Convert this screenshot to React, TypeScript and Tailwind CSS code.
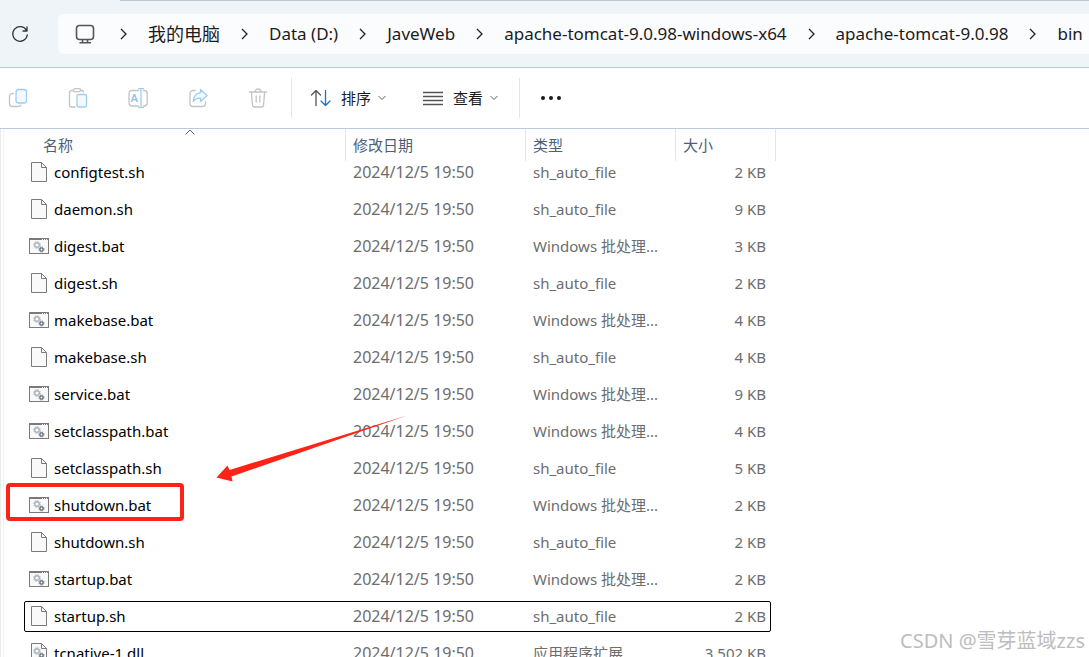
import { Fragment } from "react";
import type { ReactNode } from "react";

type FileKind = "sh" | "bat" | "dll";

type FileEntry = {
  name: string;
  type: string;
  size: string;
  kind: FileKind;
  focused?: boolean;
  marked?: boolean;
};

const SH = "sh_auto_file";
const BAT = "Windows 批处理...";
const modified = "2024/12/5 19:50";

const files: FileEntry[] = [
  { name: "configtest.sh", type: SH, size: "2 KB", kind: "sh" },
  { name: "daemon.sh", type: SH, size: "9 KB", kind: "sh" },
  { name: "digest.bat", type: BAT, size: "3 KB", kind: "bat" },
  { name: "digest.sh", type: SH, size: "2 KB", kind: "sh" },
  { name: "makebase.bat", type: BAT, size: "4 KB", kind: "bat" },
  { name: "makebase.sh", type: SH, size: "4 KB", kind: "sh" },
  { name: "service.bat", type: BAT, size: "9 KB", kind: "bat" },
  { name: "setclasspath.bat", type: BAT, size: "4 KB", kind: "bat" },
  { name: "setclasspath.sh", type: SH, size: "5 KB", kind: "sh" },
  { name: "shutdown.bat", type: BAT, size: "2 KB", kind: "bat", marked: true },
  { name: "shutdown.sh", type: SH, size: "2 KB", kind: "sh" },
  { name: "startup.bat", type: BAT, size: "2 KB", kind: "bat" },
  { name: "startup.sh", type: SH, size: "2 KB", kind: "sh", focused: true },
  { name: "tcnative-1.dll", type: "应用程序扩展", size: "3,502 KB", kind: "dll" },
];

const crumbs = [
  "我的电脑",
  "Data (D:)",
  "JaveWeb",
  "apache-tomcat-9.0.98-windows-x64",
  "apache-tomcat-9.0.98",
  "bin",
];

const Icon = ({ children }: { children: ReactNode }) => (
  <svg
    viewBox="0 0 20 20"
    className="size-5 shrink-0"
    fill="none"
    strokeWidth="1.3"
    strokeLinecap="round"
    strokeLinejoin="round"
    aria-hidden="true"
  >
    {children}
  </svg>
);

const GRAY = "#c4c4c4";
const BLUE = "#9fcdf0";

const tools = [
  {
    label: "复制",
    icon: (
      <Icon>
        <path d="M5.5 5.5h-1a3 3 0 0 0-3 3v7a3 3 0 0 0 3 3H10a3 3 0 0 0 2.8-1.5" stroke={GRAY} />
        <rect x="8" y="1.5" width="10.5" height="13.5" rx="2.5" stroke={BLUE} fill="#f3f9fe" />
      </Icon>
    ),
  },
  {
    label: "粘贴",
    icon: (
      <Icon>
        <path d="M5.500 2.500h-2a2 2 0 0 0-2 2V17a2 2 0 0 0 2 2H7M12.5 2.5H14A1.5 1.5 0 0 1 15.5 4" stroke={GRAY} />
        <rect x="5.5" y="0.7" width="7" height="3" rx="1.5" stroke={GRAY} />
        <rect x="9" y="6.5" width="9.5" height="12.5" rx="1.5" stroke={BLUE} fill="#f3f9fe" />
      </Icon>
    ),
  },
  {
    label: "重命名",
    icon: (
      <Icon>
        <path
          d="M10.5 2.5H4a3 3 0 0 0-3 3V15a3 3 0 0 0 3 3h6.500M15.5 2.500h.7a3 3 0 0 1 3 3V15a3 3 0 0 1-3 3h-.7"
          stroke={GRAY}
        />
        <path d="M10.5 0.7h5M10.5 19.3h5M13 0.7v18.6" stroke={BLUE} />
        <text x="2.5" y="14" fontSize="11" fill="#8cc3ee" className="font-['Noto_Sans',sans-serif] font-semibold">
          A
        </text>
      </Icon>
    ),
  },
  {
    label: "共享",
    icon: (
      <Icon>
        <path d="M7 2.5H5a3 3 0 0 0-3 3v10a3 3 0 0 0 3 3h9.500a3 3 0 0 0 3-3V14" stroke={GRAY} />
        <path
          d="M12.5 1.5l6.500 6-6.500 6v-3.300c-3-.2-5.200.6-7.300 3.300.4-5 3-8.300 7.300-8.800z"
          stroke={BLUE}
          fill="#f3f9fe"
        />
      </Icon>
    ),
  },
  {
    label: "删除",
    icon: (
      <Icon>
        <path
          d="M1.5 4h17M7 4a3 3 0 0 1 6 0M3.3 4l1.200 13a2 2 0 0 0 2 2h7a2 2 0 0 0 2-2l1.200-13M8.200 8v6M11.8 8v6"
          stroke={GRAY}
        />
      </Icon>
    ),
  },
];

const ChevronDown = () => (
  <svg viewBox="0 0 8 6" className="h-[6px] w-2" fill="none" stroke="#666" aria-hidden="true">
    <path d="M0.5 1L4 4.5 7.5 1" />
  </svg>
);

const Gears = () => (
  <>
    <circle cx="8" cy="7" r="2.3" stroke="#a9b4be" strokeWidth="1.4" />
    <circle cx="8" cy="7" r="3.4" stroke="#a9b4be" strokeDasharray="1.3 1.37" />
    <circle cx="12.5" cy="11.5" r="1.6" stroke="#66717b" strokeWidth="1.3" />
    <circle cx="12.5" cy="11.5" r="2.5" stroke="#66717b" strokeDasharray="1 0.96" />
  </>
);

const FileIcon = ({ kind }: { kind: FileKind }) => {
  if (kind === "bat") {
    return (
      <svg viewBox="0 0 20 16" className="h-4 w-5" fill="none" aria-hidden="true">
        <rect x="0.5" y="0.5" width="19" height="15" fill="#f9f9f9" stroke="#7a7a7a" />
        <path d="M0 1h20" stroke="#7a7a7a" strokeWidth="2" />
        <path d="M13 1.5h1M15 1.5h1M17 1.5h1" stroke="#fff" />
        <Gears />
      </svg>
    );
  }
  return (
    <svg viewBox="0 0 16 20" className="h-5 w-4" fill="none" aria-hidden="true">
      <path d="M0.5 0.5h10l5 5v14h-15z" fill="#f9f9f9" stroke="#7a7a7a" />
      <path d="M10.5 0.5v5h5" stroke="#7a7a7a" />
      {kind === "dll" && (
        <g transform="translate(-2 1)">
          <Gears />
        </g>
      )}
    </svg>
  );
};

const AddressBar = () => (
  <header className="flex h-[68px] shrink-0 items-center border-b border-[#b9cbdb] bg-[#eff4f9]">
    <div className="flex w-[58px] shrink-0 pl-[10px]">
      <button aria-label="刷新" className="text-[#333]">
        <Icon>
          <path d="M16.500 6.500A7.300 7.300 0 1 0 17.300 11M17 3v4h-4" stroke="currentColor" />
        </Icon>
      </button>
    </div>
    <nav
      aria-label="路径"
      className="flex h-10 min-w-0 flex-1 items-center gap-[21px] overflow-hidden rounded-l-md bg-[#fbfcfe] pl-[17px] text-[17px] whitespace-nowrap text-[#1b1b1b]"
    >
      <span className="mr-1 shrink-0">
        <Icon>
          <g stroke="#555" strokeWidth="1.6">
            <rect x="1.5" y="1.5" width="17" height="14" rx="3" />
            <path d="M7.5 16v2.500M12.5 16v2.500M5 18.700h10.500" />
          </g>
        </Icon>
      </span>
      {crumbs.map((crumb, index) => (
        <Fragment key={crumb}>
          <svg viewBox="0 0 7 12" className="h-3 w-[7px] shrink-0" fill="none" stroke="#222" strokeWidth="1.3" aria-hidden="true">
            <path d="M1 1l5 5-5 5" />
          </svg>
          <a href="#" className={index === 0 ? "text-lg" : ""}>
            {crumb}
          </a>
        </Fragment>
      ))}
    </nav>
  </header>
);

const Toolbar = () => (
  <div className="flex h-[61px] shrink-0 items-center border-b border-[#b9cbdb] bg-white text-[15px] text-[#1b1b1b]">
    <div className="flex gap-10 pl-2">
      {tools.map((tool) => (
        <button key={tool.label} aria-label={tool.label} disabled>
          {tool.icon}
        </button>
      ))}
    </div>
    <div className="ml-[23px] flex h-10 items-center gap-[37px] border-l border-[#e5e5e5] pr-[21px] pl-[19px]">
      <button className="flex items-center gap-[10px]">
        <Icon>
          <path d="M5 17.5v-15M0.5 7L5 2.5 9.5 7" stroke="#555" />
          <path d="M14.5 2.5v15M10 13l4.500 4.500L19 13" stroke="#0f78d4" />
        </Icon>
        <span className="flex items-center gap-[7px]">
          排序 <ChevronDown />
        </span>
      </button>
      <button className="flex items-center gap-[10px]">
        <Icon>
          <path d="M0 4.5h20M0 8.5h20M0 12.5h20M0 16.5h20" stroke="#555" strokeLinecap="butt" />
        </Icon>
        <span className="flex items-center gap-[7px]">
          查看 <ChevronDown />
        </span>
      </button>
    </div>
    <div className="flex h-10 items-center border-l border-[#e5e5e5] pl-5">
      <button aria-label="更多">
        <svg viewBox="0 0 22 6" className="h-[6px] w-[22px]" fill="#1b1b1b" aria-hidden="true">
          <circle cx="3" cy="3" r="2" />
          <circle cx="11" cy="3" r="2" />
          <circle cx="19" cy="3" r="2" />
        </svg>
      </button>
    </div>
  </div>
);

const HeaderCell = ({ label, first }: { label: string; first?: boolean }) => (
  <th className="h-[25px] p-0 text-left font-normal">
    <div
      className={
        first
          ? "relative -mb-[7px] flex h-8 items-center border-r border-[#e5e5e5] pl-[22px]"
          : "-mb-[7px] flex h-8 items-center border-r border-[#e5e5e5] pl-[7px]"
      }
    >
      {label}
      {first && (
        <svg viewBox="0 0 10 6" className="absolute top-0 left-[164px] h-[6px] w-[10px]" fill="none" stroke="#666" aria-hidden="true">
          <path d="M0.5 5.5L5 1l4.500 4.500" />
        </svg>
      )}
    </div>
  </th>
);

// red box and arrow pointing at the script to run
const Marker = () => (
  <>
    <span className="absolute -top-1 -left-[15px] h-[38px] w-[178px] rounded border-4 border-[#ff2317]" />
    <svg viewBox="0 0 192 68" className="absolute -top-[72px] left-[195px] h-[68px] w-48" fill="#ff2317" aria-hidden="true">
      <path d="M191 0.5L13.500 55 11.500 50.500 0.500 62.500 16.500 66.500 15.500 61.500z" />
    </svg>
  </>
);

const FileRow = ({ file }: { file: FileEntry }) => (
  <tr
    className={
      file.focused
        ? "relative h-[37px] after:pointer-events-none after:absolute after:inset-y-[3px] after:right-[5px] after:left-[3px] after:rounded-xs after:border after:border-black"
        : "h-[37px]"
    }
  >
    <td className="relative p-0 pb-px pl-2 text-black">
      <div className="flex items-center gap-[5px]">
        <span className="flex w-5 justify-center">
          <FileIcon kind={file.kind} />
        </span>
        {file.name}
      </div>
      {file.marked && <Marker />}
    </td>
    <td className="p-0 pb-px pl-[7px] text-base leading-5">{modified}</td>
    <td className="p-0 pb-px pl-[7px]">{file.type}</td>
    <td className="p-0 pr-[10px] pb-px text-right">{file.size}</td>
  </tr>
);

export default function App() {
  return (
    <div className="relative flex h-screen flex-col overflow-hidden bg-white font-['Noto_Sans','Noto_Sans_CJK_SC',sans-serif]">
      <div className="absolute top-0 right-0 left-[120px] h-px bg-[#b9cbdb]" />
      <AddressBar />
      <Toolbar />
      <main className="flex min-h-0 flex-1 overflow-hidden border-l border-[#ececec]">
        <div className="ml-[2px] flex-1 border-l border-[#f3f3f3] pl-[17px]">
          <table className="w-[755px] table-fixed border-collapse text-[15px] leading-5 whitespace-nowrap text-[#6d6d6d]">
            <colgroup>
              <col className="w-[325px]" />
              <col className="w-[180px]" />
              <col className="w-[150px]" />
              <col className="w-[100px]" />
            </colgroup>
            <thead className="text-[#4c607a]">
              <tr>
                <HeaderCell label="名称" first />
                <HeaderCell label="修改日期" />
                <HeaderCell label="类型" />
                <HeaderCell label="大小" />
              </tr>
            </thead>
            <tbody>
              {files.map((file) => (
                <FileRow key={file.name} file={file} />
              ))}
            </tbody>
          </table>
        </div>
      </main>
      <p className="absolute right-1 bottom-[2px] text-[20px] leading-7 text-[#bdbdbd] [text-shadow:1px_1px_0_#fff]">
        CSDN @雪芽蓝域zzs
      </p>
    </div>
  );
}
